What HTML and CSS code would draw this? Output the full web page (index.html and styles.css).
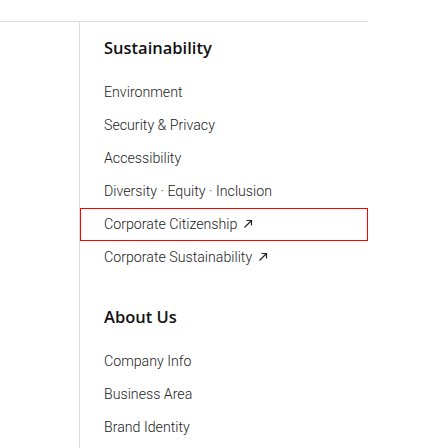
FILE: index.html
```html
<!DOCTYPE html>
<html lang="en">
<head>
<meta charset="utf-8">
<link rel="stylesheet" href="styles.css">
</head>
<body>
<div class="footer">
  <div class="spacer"></div>
  <div class="col">
    <section class="group">
      <h3 class="title">Sustainability</h3>
      <ul class="list">
        <li><a class="link" href="#">Environment</a></li>
        <li><a class="link" href="#">Security &amp; Privacy</a></li>
        <li><a class="link" href="#">Accessibility</a></li>
        <li><a class="link" href="#">Diversity · Equity · Inclusion</a></li>
        <li><a class="link focus" href="#">Corporate Citizenship <svg class="ext" viewBox="0 0 10 10" width="10" height="10"><path d="M1.5 8.5 L8.5 1.5 M3.5 1.5 H8.5 V6.5" fill="none" stroke="#222" stroke-width="1.2"/></svg></a></li>
        <li><a class="link" href="#">Corporate Sustainability <svg class="ext" viewBox="0 0 10 10" width="10" height="10"><path d="M1.5 8.5 L8.5 1.5 M3.5 1.5 H8.5 V6.5" fill="none" stroke="#222" stroke-width="1.2"/></svg></a></li>
      </ul>
    </section>
    <section class="group">
      <h3 class="title">About Us</h3>
      <ul class="list">
        <li><a class="link" href="#">Company Info</a></li>
        <li><a class="link" href="#">Business Area</a></li>
        <li><a class="link" href="#">Brand Identity</a></li>
      </ul>
    </section>
  </div>
</div>
</body>
</html>
```
FILE: styles.css
```css
html, body {
  margin: 0;
  padding: 0;
  background: #fff;
}
body {
  font-family: Roboto, "Liberation Sans", sans-serif;
  color: #333;
}
.footer {
  margin-top: 21px;
  width: 368px;
  border-top: 1px solid #ddd;
  display: grid;
  grid-template-columns: 79px 1fr;
  height: 427px;
}
.col {
  border-left: 1px solid #ddd;
}
.group + .group {
  margin-top: 17px;
}
.title {
  margin: 0;
  height: 54px;
  padding: 16px 0 0 24px;
  box-sizing: border-box;
  font-family: "Open Sans", sans-serif;
  font-size: 16.5px;
  font-weight: 600;
  line-height: 20px;
  color: #111;
}
.list {
  list-style: none;
  margin: 0;
  padding: 0;
}
.link {
  display: flex;
  align-items: center;
  gap: 6px;
  height: 33px;
  padding: 0 0 1px 24px;
  box-sizing: border-box;
  font-size: 14.2px;
  font-weight: 300;
  color: #222;
  text-decoration: none;
}
.link.focus {
  outline: 1px solid #f00;
  outline-offset: -1px;
}
.ext {
  display: block;
}
```
